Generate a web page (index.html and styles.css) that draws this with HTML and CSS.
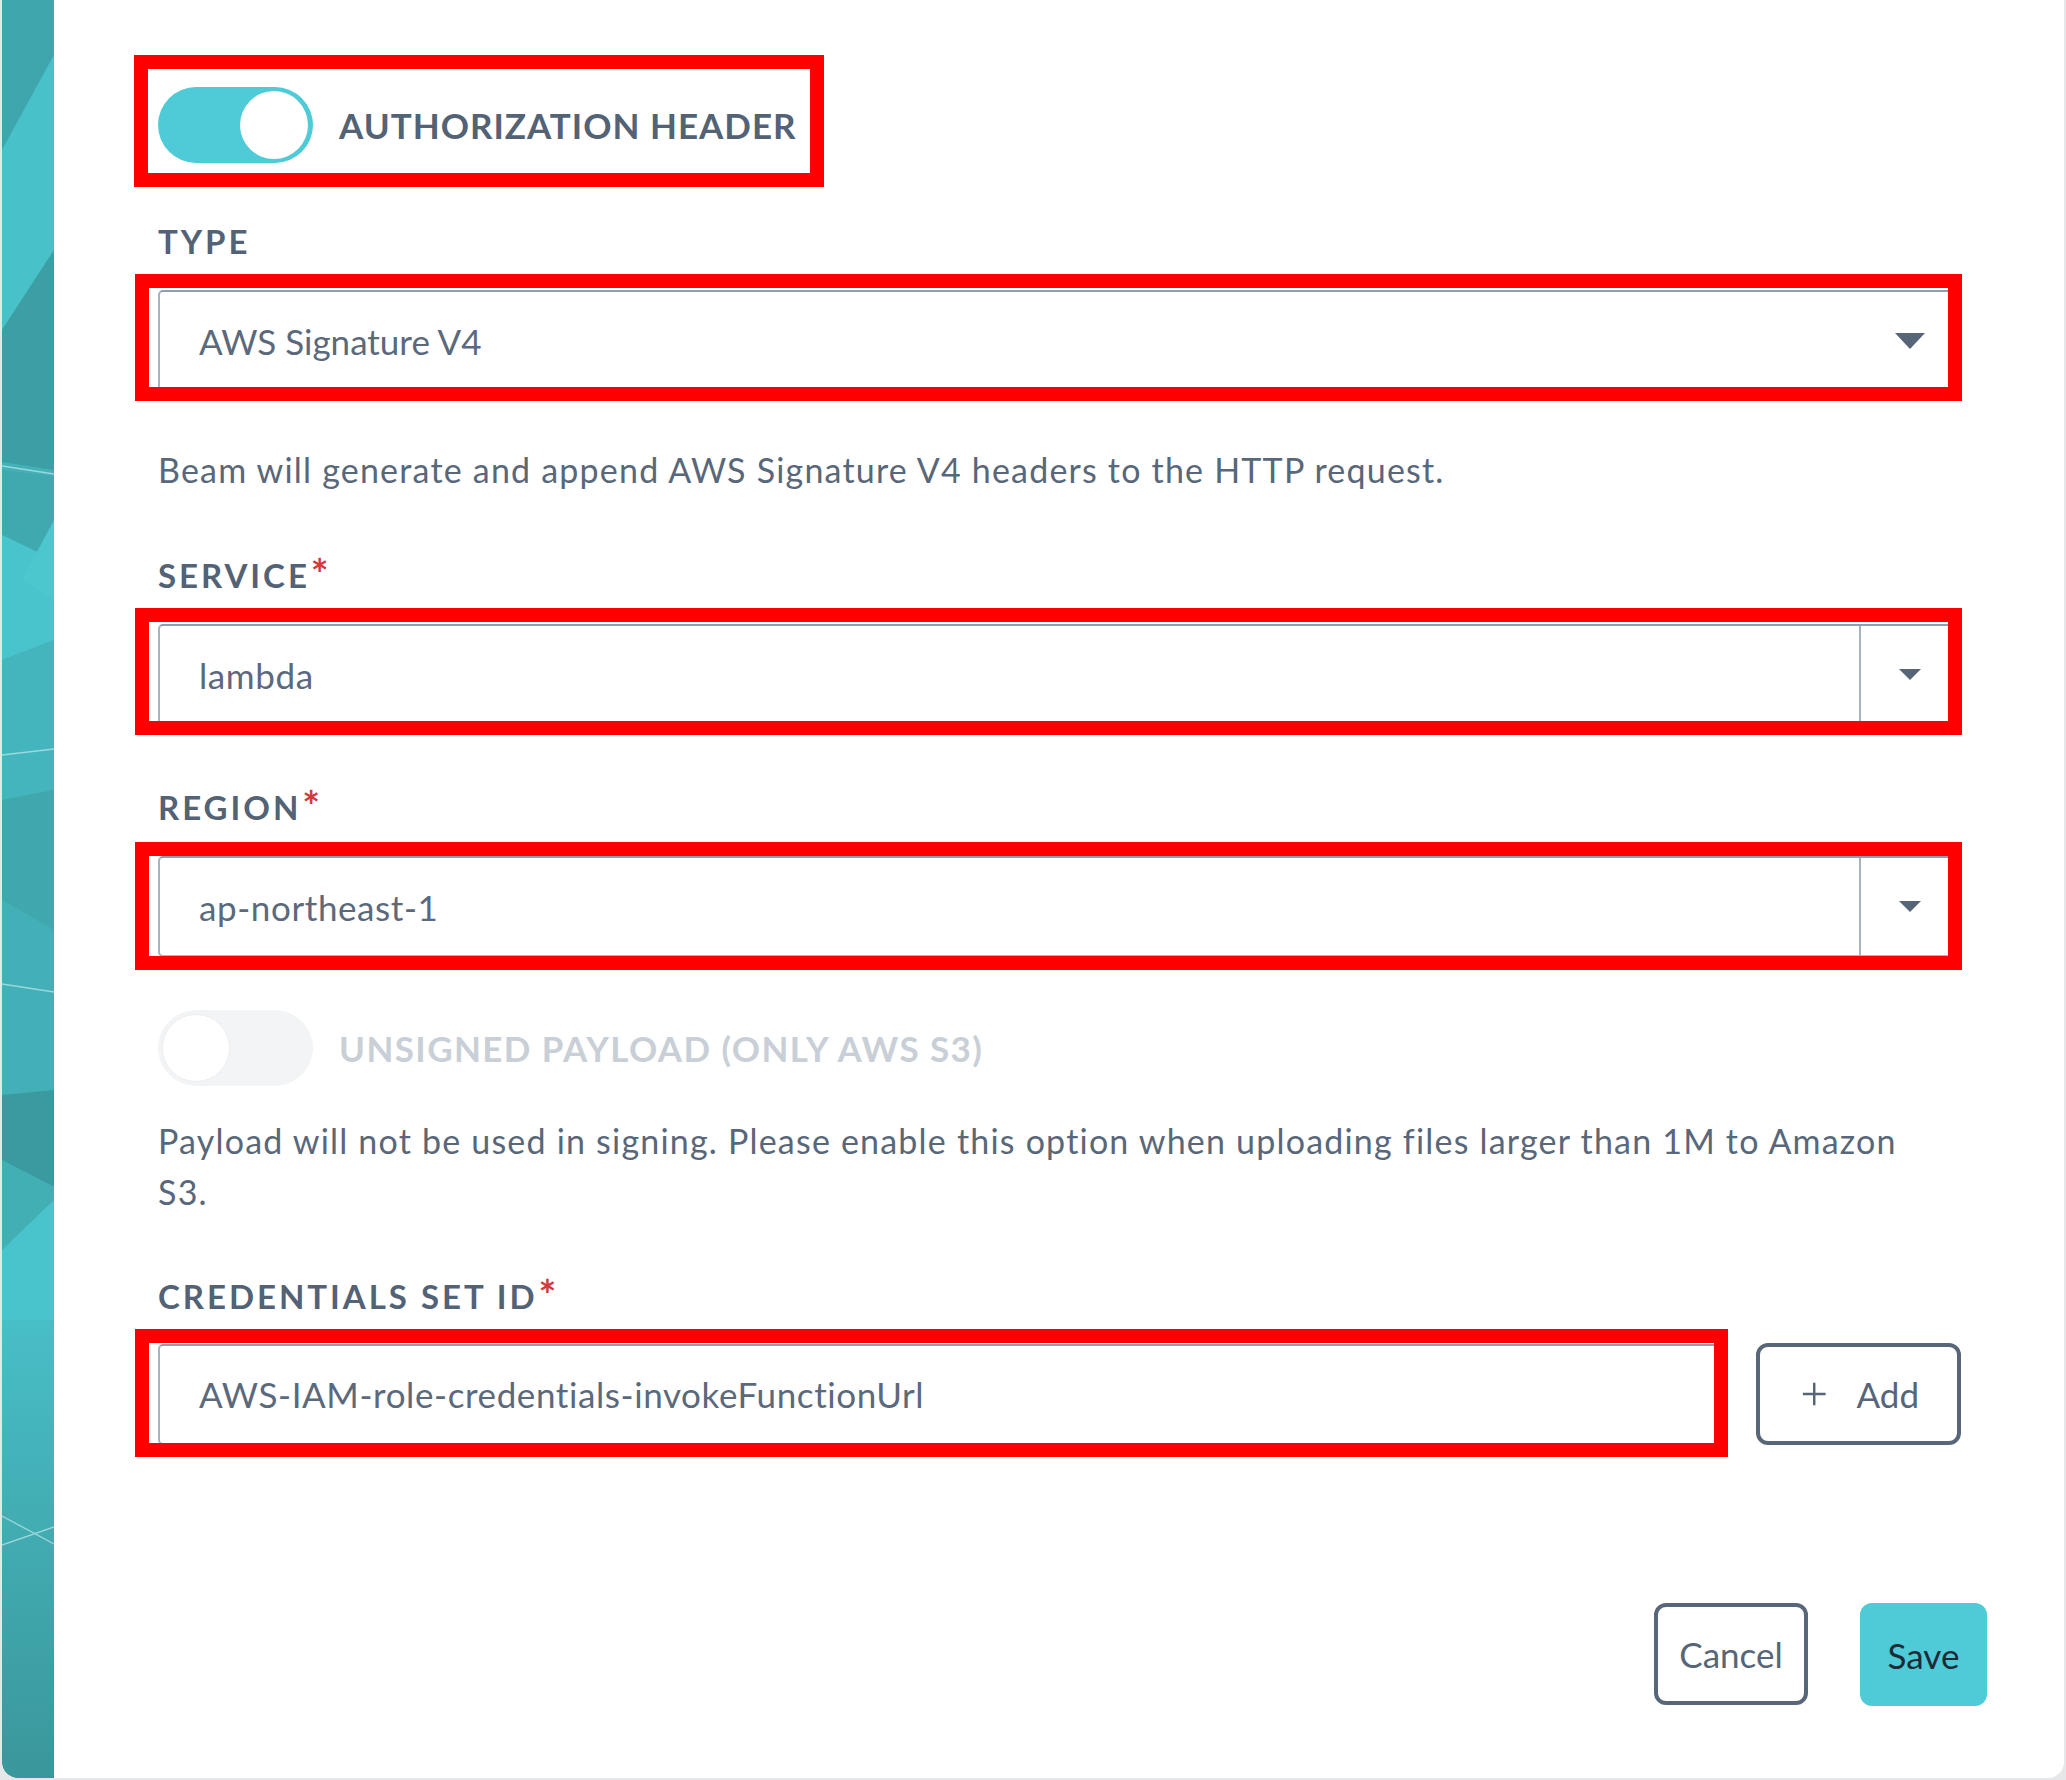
FILE: index.html
```html
<!DOCTYPE html>
<html lang="en">
<head>
<meta charset="utf-8">
<title>Authorization header</title>
<link rel="stylesheet" href="styles.css">
</head>
<body>
<div class="page">
  <div class="modal">
    <div class="strip">
      <svg class="strip-art" viewBox="0 0 52 1778" preserveAspectRatio="none" aria-hidden="true">
        <defs>
          <linearGradient id="gbottom" x1="0" y1="0" x2="0" y2="1">
            <stop offset="0" stop-color="#48bec6"/>
            <stop offset="1" stop-color="#3a979b"/>
          </linearGradient>
        </defs>
        <rect x="0" y="0" width="52" height="1778" fill="#43b1b8"/>
        <polygon points="0,0 52,0 52,55 0,150" fill="#3fa6ad"/>
        <polygon points="0,150 52,55 52,250 0,330" fill="#49c1c9"/>
        <polygon points="0,330 52,250 52,470 0,462" fill="#3c9fa5"/>
        <polygon points="0,470 52,476 52,560 0,535" fill="#40a9af"/>
        <polygon points="0,535 52,560 52,640 0,660" fill="#4ac4cc"/>
        <polygon points="52,520 52,600 20,580" fill="#4cc7ce"/>
        <polygon points="0,660 52,640 52,790 0,800" fill="#44b5bc"/>
        <polygon points="0,800 52,790 52,930 0,900" fill="#3fa7ad"/>
        <polygon points="0,900 52,930 52,1090 0,1095" fill="#43b0b7"/>
        <polygon points="0,1095 52,1090 52,1187 0,1160" fill="#3a9aa0"/>
        <polygon points="0,1160 52,1187 52,1200 0,1250" fill="#42afb5"/>
        <polygon points="0,1250 52,1200 52,1320 0,1320" fill="#4ac4cc"/>
        <rect x="0" y="1320" width="52" height="458" fill="url(#gbottom)"/>
        <g stroke="#bfe9ec" stroke-width="1.4" fill="none" opacity="0.7">
          <line x1="0" y1="466" x2="52" y2="474"/>
          <line x1="0" y1="755" x2="52" y2="749"/>
          <line x1="0" y1="984" x2="52" y2="992"/>
          <line x1="0" y1="1516" x2="52" y2="1544"/>
          <line x1="0" y1="1545" x2="52" y2="1527"/>
        </g>
      </svg>
    </div>

    <div class="main">
      <div class="form">
        <div class="hl hl-auth switch-row">
          <span class="switch switch-on"><span class="knob"></span></span>
          <span class="switch-label">AUTHORIZATION HEADER</span>
        </div>

        <div class="field field-type">
          <div class="label">TYPE</div>
          <div class="hl hl-select select">
            <span class="select-value select-value-tight">AWS Signature V4</span>
            <svg class="caret-lg" viewBox="0 0 30 16" aria-hidden="true"><polygon points="0,0 30,0 15,16" fill="#566678"/></svg>
          </div>
        </div>

        <p class="help help-type">Beam will generate and append AWS Signature V4 headers to the HTTP request.</p>

        <div class="field field-service">
          <div class="label">SERVICE<span class="req">*</span></div>
          <div class="hl hl-select select combo">
            <span class="select-value">lambda</span>
            <span class="combo-btn"><svg class="caret-sm" viewBox="0 0 22 11" aria-hidden="true"><polygon points="0,0 22,0 11,11" fill="#566678"/></svg></span>
          </div>
        </div>

        <div class="field field-region">
          <div class="label">REGION<span class="req">*</span></div>
          <div class="hl hl-region select combo">
            <span class="select-value">ap-northeast-1</span>
            <span class="combo-btn"><svg class="caret-sm" viewBox="0 0 22 11" aria-hidden="true"><polygon points="0,0 22,0 11,11" fill="#566678"/></svg></span>
          </div>
        </div>

        <div class="switch-row switch-row-off">
          <span class="switch switch-off"><span class="knob"></span></span>
          <span class="switch-label switch-label-off">UNSIGNED PAYLOAD (ONLY AWS S3)</span>
        </div>

        <p class="help help-payload">Payload will not be used in signing. Please enable this option when uploading files larger than 1M to Amazon S3.</p>

        <div class="field field-cred">
          <div class="label">CREDENTIALS SET ID<span class="req">*</span></div>
          <div class="cred-row">
            <div class="hl hl-input input">
              <span class="select-value">AWS-IAM-role-credentials-invokeFunctionUrl</span>
            </div>
            <button class="btn btn-outline btn-add" type="button">
              <svg class="plus" viewBox="0 0 28 28" aria-hidden="true"><path d="M14 1v26M1 14h26" stroke="#566678" stroke-width="2.8" fill="none"/></svg>
              <span>Add</span>
            </button>
          </div>
        </div>
      </div>

      <div class="footer">
        <button class="btn btn-outline btn-cancel" type="button">Cancel</button>
        <button class="btn btn-primary btn-save" type="button">Save</button>
      </div>
    </div>
  </div>
</div>
</body>
</html>
```

FILE: styles.css
```css
* { box-sizing: border-box; }

html, body {
  margin: 0;
  padding: 0;
}

body {
  background: #e6e7e8;
  font-family: Lato, "Source Sans Pro", "Liberation Sans", sans-serif;
  color: #536275;
}

.page {
  width: 2066px;
  height: 1780px;
  padding: 0 2px 2px 2px;
}

.modal {
  display: flex;
  height: 1778px;
  background: #ffffff;
  border-radius: 0 0 16px 16px;
  overflow: hidden;
}

.strip {
  flex: none;
  width: 52px;
  border-bottom-left-radius: 16px;
  overflow: hidden;
}

.strip-art {
  display: block;
  width: 52px;
  height: 1778px;
}

.main {
  flex: 1;
  display: flex;
  flex-direction: column;
  padding: 87px 77px 0 104px;
}

.form {
  display: flex;
  flex-direction: column;
  align-items: stretch;
  padding-right: 26px;
}

/* red annotation frames laid over the screenshot */
.hl { position: relative; }
.hl::after {
  content: "";
  position: absolute;
  border: 14px solid #ff0000;
  pointer-events: none;
}
.hl-auth::after { top: -32px; right: -27px; bottom: -24px; left: -24px; }
.hl-select::after { top: -18px; right: -3px; bottom: -12px; left: -25px; }
.hl-region::after { top: -16px; right: -3px; bottom: -15px; left: -25px; }
.hl-input::after { top: -17px; right: -4px; bottom: -14px; left: -25px; }

/* switches */
.switch-row {
  display: flex;
  align-items: center;
  gap: 26px;
  height: 76px;
  align-self: flex-start;
}

.switch {
  flex: none;
  display: flex;
  align-items: center;
  width: 155px;
  height: 76px;
  border-radius: 38px;
  padding: 0 5px 0 4px;
}

.switch-on {
  background: #4ecbd6;
  justify-content: flex-end;
}

.switch-off {
  background: #f2f4f6;
  justify-content: flex-start;
}

.knob {
  width: 68px;
  height: 68px;
  border-radius: 50%;
  background: #ffffff;
}

.switch-off .knob {
  border: 1px solid #eceef1;
}

.switch-label {
  font-size: 35px;
  font-weight: 700;
  letter-spacing: 1px;
  color: #536275;
  white-space: nowrap;
}

.switch-label-off {
  color: #c9cfd6;
  letter-spacing: 1.4px;
}

.switch-row-off { margin-top: 53px; }

/* fields */
.label {
  font-size: 33px;
  line-height: 40px;
  font-weight: 700;
  letter-spacing: 0.09em;
  color: #536275;
  white-space: nowrap;
}

.req {
  color: #d23b3b;
  font-size: 42px;
  line-height: 0;
  letter-spacing: 0;
  vertical-align: -2px;
  margin-left: 1px;
}

.field-type { margin-top: 58px; }
.field-service { margin-top: 60px; }
.field-region { margin-top: 62px; }
.field-cred { margin-top: 59px; }

.field-type .select,
.field-service .select,
.field-region .select { margin-top: 29px; }

.select,
.input {
  display: flex;
  align-items: center;
  height: 101px;
  border: 2px solid #a7b3c1;
  border-top-color: #8e9db0;
  border-radius: 5px;
  background: #ffffff;
}

.select-value {
  flex: 1;
  padding-left: 39px;
  font-size: 35px;
  letter-spacing: 0.6px;
  color: #5a697b;
  white-space: nowrap;
}

.select-value-tight { letter-spacing: 0; }

.caret-lg {
  flex: none;
  width: 30px;
  height: 16px;
  margin-right: 34px;
}

.combo-btn {
  flex: none;
  align-self: stretch;
  width: 100px;
  display: flex;
  align-items: center;
  justify-content: center;
  border-left: 2px solid #a7b3c1;
}

.caret-sm {
  width: 22px;
  height: 11px;
}

.help {
  margin: 0;
  max-width: 1775px;
  font-size: 34px;
  line-height: 51px;
  letter-spacing: 1.2px;
  color: #586779;
}

.help-type { margin-top: 53px; }
.help-payload { margin-top: 29px; }

.cred-row {
  display: flex;
  align-items: center;
  gap: 30px;
  margin-top: 27px;
}

.input { flex: 1; }

/* buttons */
.btn {
  font-family: inherit;
  font-size: 35px;
  height: 102px;
  border-radius: 12px;
  cursor: pointer;
  display: inline-flex;
  align-items: center;
  justify-content: center;
}

.btn-outline {
  background: #ffffff;
  border: 4px solid #576779;
  color: #566678;
}

.btn-add {
  flex: none;
  width: 205px;
  gap: 30px;
  padding: 0 38px 0 42px;
}

.plus {
  width: 28px;
  height: 28px;
}

.footer {
  display: flex;
  justify-content: flex-end;
  gap: 52px;
  margin-top: 158px;
}

.btn-cancel {
  width: 154px;
}

.btn-primary {
  background: #4ecbd6;
  border: none;
  color: #1e2a36;
}

.btn-save {
  width: 127px;
  height: 103px;
}
```
